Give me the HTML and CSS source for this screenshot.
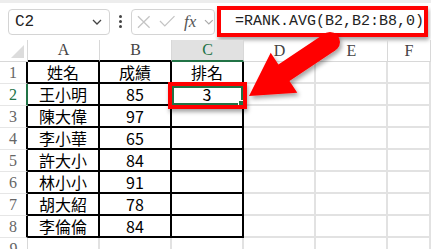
FILE: index.html
```html
<!DOCTYPE html>
<html>
<head>
    <title>RANK.AVG</title>
    <link rel="stylesheet" href="styles.css">
</head>
<body>
    <div class="topstrip"></div>
    <div class="toolbar">
        <div class="namebox">
            <span>C2</span>
            <svg width="10" height="6" viewBox="0 0 10 6"><path d="M1 1 L5 5 L9 1" fill="none" stroke="#444" stroke-width="1.3"/></svg>
        </div>
        <div class="dots"><i></i><i></i><i></i></div>
        <div class="fxbox">
            <svg width="14" height="14" viewBox="0 0 14 14"><path d="M1 1 L13 13 M13 1 L1 13" stroke="#c4c4c4" stroke-width="1.3"/></svg>
            <svg width="17" height="13" viewBox="0 0 17 13"><path d="M1 6 L6 11 L16 1" fill="none" stroke="#c4c4c4" stroke-width="1.3"/></svg>
            <span class="fx">fx</span>
            <svg width="10" height="6" viewBox="0 0 10 6"><path d="M1 1 L5 5 L9 1" fill="none" stroke="#aaa" stroke-width="1.2"/></svg>
        </div>
        <div class="formula">=RANK.AVG(B2,B2:B8,0)</div>
    </div>

    <div class="sheet">
        <div class="corner"><span></span></div>
        <div class="colhead tb">A</div>
        <div class="colhead tb">B</div>
        <div class="colhead sel">C</div>
        <div class="colhead">D</div>
        <div class="colhead">E</div>
        <div class="colhead">F</div>

        <div class="rowhead tb">1</div>
        <div class="cell b">姓名</div><div class="cell b">成績</div><div class="cell b">排名</div>
        <div class="cell"></div><div class="cell"></div><div class="cell"></div>

        <div class="rowhead sel">2</div>
        <div class="cell b">王小明</div><div class="cell b">85</div>
        <div class="cell b active">3<div class="cursor"><span></span></div><div class="mark"></div></div>
        <div class="cell"></div><div class="cell"></div><div class="cell"></div>

        <div class="rowhead tb">3</div>
        <div class="cell b">陳大偉</div><div class="cell b">97</div><div class="cell b"></div>
        <div class="cell"></div><div class="cell"></div><div class="cell"></div>

        <div class="rowhead tb">4</div>
        <div class="cell b">李小華</div><div class="cell b">65</div><div class="cell b"></div>
        <div class="cell"></div><div class="cell"></div><div class="cell"></div>

        <div class="rowhead tb">5</div>
        <div class="cell b">許大小</div><div class="cell b">84</div><div class="cell b"></div>
        <div class="cell"></div><div class="cell"></div><div class="cell"></div>

        <div class="rowhead tb">6</div>
        <div class="cell b">林小小</div><div class="cell b">91</div><div class="cell b"></div>
        <div class="cell"></div><div class="cell"></div><div class="cell"></div>

        <div class="rowhead tb">7</div>
        <div class="cell b">胡大紹</div><div class="cell b">78</div><div class="cell b"></div>
        <div class="cell"></div><div class="cell"></div><div class="cell"></div>

        <div class="rowhead tb">8</div>
        <div class="cell b">李倫倫</div><div class="cell b">84</div><div class="cell b"></div>
        <div class="cell"></div><div class="cell"></div><div class="cell"></div>

        <div class="rowhead">9</div>
        <div class="cell"></div><div class="cell"></div><div class="cell"></div>
        <div class="cell"></div><div class="cell"></div><div class="cell"></div>
    </div>

    <!-- 標示箭頭 -->
    <svg class="arrow" width="431" height="249" viewBox="0 0 431 249">
        <defs>
            <filter id="sh" x="-20%" y="-20%" width="150%" height="150%">
                <feDropShadow dx="2" dy="3" stdDeviation="2" flood-color="#000" flood-opacity="0.35"/>
            </filter>
        </defs>
        <g filter="url(#sh)" fill="#ff0000">
            <polygon points="249,96 270.7,52.7 278.4,64.4 324.4,33.7 335.5,50.3 289.5,81 297.3,92.7"/>
            <circle cx="330" cy="42" r="10"/>
        </g>
    </svg>
</body>
</html>
```

FILE: styles.css
```css
body {
    margin: 0;
    width: 431px;
    height: 249px;
    overflow: hidden;
    background: #fff;
    position: relative;
    font-family: "Noto Sans CJK TC", "Noto Sans", sans-serif;
}
.topstrip {
    height: 3px;
    background: #ededed;
}
.toolbar {
    height: 37px;
    display: flex;
    align-items: center;
    padding-left: 8px;
}
.namebox {
    box-sizing: border-box;
    width: 102px;
    height: 26px;
    border: 1px solid #d4d4d4;
    border-radius: 4px;
    display: flex;
    align-items: center;
    justify-content: space-between;
    padding: 0 7px 0 6px;
    font-family: "Liberation Mono", monospace;
    font-size: 16px;
    color: #222;
}
.dots {
    width: 21px;
    display: flex;
    flex-direction: column;
    align-items: center;
    gap: 2px;
}
.dots i {
    width: 3px;
    height: 3px;
    background: #444;
    border-radius: 50%;
}
.fxbox {
    box-sizing: border-box;
    width: 84px;
    height: 26px;
    border: 1px solid #d4d4d4;
    border-radius: 4px;
    display: flex;
    align-items: center;
    gap: 8px;
    padding-left: 5px;
}
.fx {
    font-family: "Liberation Serif", serif;
    font-style: italic;
    font-size: 17px;
    color: #555;
    margin-left: 1px;
}
.formula {
    box-sizing: border-box;
    margin-left: 2px;
    width: 211px;
    height: 31px;
    border: 4px solid #ff0000;
    box-shadow: 1px 3px 4px rgba(0, 0, 0, 0.35);
    padding-left: 14px;
    font-family: "Liberation Mono", monospace;
    font-size: 15px;
    line-height: 23px;
    color: #222;
    white-space: nowrap;
}
.sheet {
    display: grid;
    grid-template-columns: 28px 72px 72px 72px 72px 72px 1fr;
    grid-auto-rows: 22px;
}
.corner, .colhead, .rowhead, .cell {
    box-sizing: border-box;
}
.corner {
    border-right: 1px solid #d8d8d8;
    border-bottom: 1px solid #d8d8d8;
    position: relative;
}
.corner span {
    position: absolute;
    right: 3px;
    bottom: 3px;
    width: 0;
    height: 0;
    border-left: 13px solid transparent;
    border-bottom: 13px solid #dcdcdc;
}
.colhead {
    border-right: 1px solid #d8d8d8;
    border-bottom: 1px solid #d8d8d8;
    display: flex;
    align-items: center;
    justify-content: center;
    font-family: "Liberation Serif", serif;
    font-size: 16px;
    color: #444;
}
.colhead.tb {
    border-bottom: 2px solid #000;
}
.colhead.sel {
    background: #e1e1e1;
    border-bottom: 2px solid #217346;
    color: #217346;
}
.rowhead {
    border-right: 1px solid #d8d8d8;
    border-bottom: 1px solid #e6e6e6;
    display: flex;
    align-items: center;
    justify-content: center;
    font-family: "Liberation Serif", serif;
    font-size: 16px;
    color: #666;
}
.rowhead.tb {
    border-right: 2px solid #000;
}
.rowhead.sel {
    border-right: 2px solid #217346;
    color: #217346;
}
.cell {
    border-right: 2px solid #e2e2e2;
    border-bottom: 2px solid #e2e2e2;
    display: flex;
    align-items: center;
    justify-content: center;
    font-size: 16px;
    color: #000;
}
.cell.b {
    border-right-color: #000;
    border-bottom-color: #000;
}
.active {
    position: relative;
}
.cursor {
    position: absolute;
    left: 0;
    top: 2px;
    right: -1px;
    bottom: -1px;
    border: 2px solid #217346;
}
.cursor span {
    position: absolute;
    right: -4px;
    bottom: -4px;
    width: 5px;
    height: 5px;
    background: #217346;
    border: 1px solid #fff;
}
.mark {
    position: absolute;
    left: -4px;
    top: -2px;
    right: -5px;
    bottom: -5px;
    border: 4px solid #ff0000;
    box-shadow: 1px 3px 4px rgba(0, 0, 0, 0.35);
}
.arrow {
    position: absolute;
    left: 0;
    top: 0;
    pointer-events: none;
}
```
